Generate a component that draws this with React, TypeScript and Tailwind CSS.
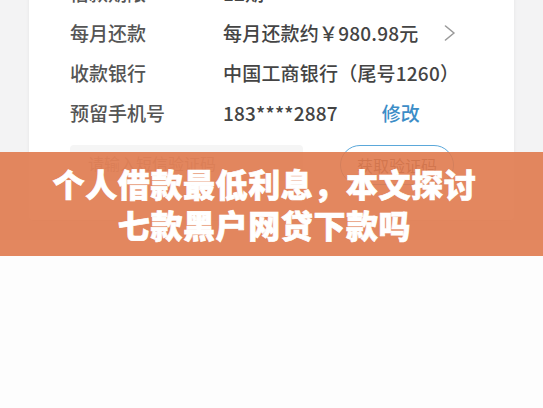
import React from 'react';

const rows = [
  { label: '借款期限', value: '12期' },
  { label: '每月还款', value: '每月还款约￥980.98元', arrow: true },
  { label: '收款银行', value: '中国工商银行（尾号1260）' },
  { label: '预留手机号', value: '183****2887', edit: true },
];

export default function App() {
  return (
    <div
      className="relative w-[543px] h-[408px] overflow-hidden bg-[#fdfdfd]"
      style={{ fontFamily: '"Noto Sans CJK SC", "Noto Sans", sans-serif' }}
    >
      {/* phone form */}
      <div className="h-[240px] bg-[#f3f3f4] px-[29px] overflow-hidden">
        <div className="-mt-[27px] w-[485px] h-[247px] bg-white rounded-[4px] shadow-[0_1px_4px_rgba(0,0,0,0.06)] pl-[41px] pr-[30px]">
          {rows.map((r) => (
            <div key={r.label} className="flex items-center h-[40px] text-[19px] font-medium">
              <span className="w-[153px] text-[#555]">{r.label}</span>
              <span className="text-[#444] tracking-[0.2px]">{r.value}</span>
              {r.arrow && (
                <svg className="ml-[26px]" width="12" height="16" viewBox="0 0 12 16" fill="none">
                  <polyline points="1.5,1 10,8 1.5,15" stroke="#9a9a9a" strokeWidth="1.6" strokeLinecap="round" strokeLinejoin="round" />
                </svg>
              )}
              {r.edit && <span className="ml-[44px] text-[#3c8dc7]">修改</span>}
            </div>
          ))}
          <div className="flex items-start mt-[12px]">
            <div className="w-[233px] h-[36px] bg-[#f5f5f5] rounded-[4px] flex items-center pl-[18px] text-[16px] text-[#aaa]">
              请输入短信验证码
            </div>
            <div className="ml-[37px] w-[114px] h-[40px] rounded-full border-[1.5px] border-[#5ba8da] flex items-center justify-center text-[16px] text-[#555]">
              获取验证码
            </div>
          </div>
        </div>
      </div>

      {/* title banner */}
      <div className="absolute left-0 right-0 top-[152px] h-[104px] bg-[#e07a4e]/90 flex flex-col items-center justify-center pr-[14px]">
        <p className="text-white text-[32px] leading-[41px] font-black tracking-[0.6px] [-webkit-text-stroke:0.7px_white]">个人借款最低利息，本文探讨</p>
        <p className="text-white text-[32px] leading-[41px] font-black tracking-[0.6px] [-webkit-text-stroke:0.7px_white]">七款黑户网贷下款吗</p>
      </div>
    </div>
  );
}
